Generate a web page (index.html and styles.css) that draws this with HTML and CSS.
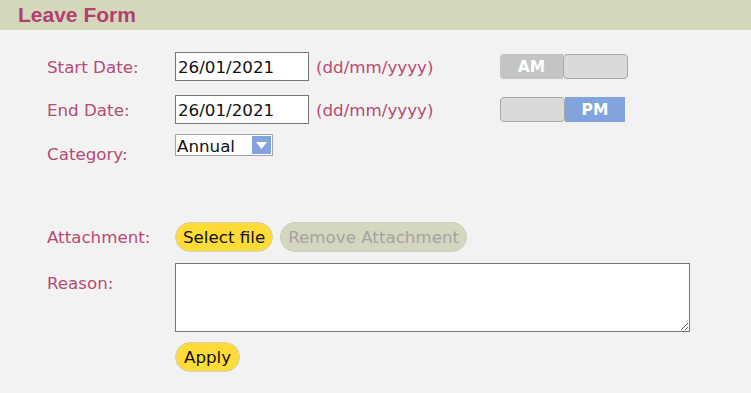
FILE: index.html
```html
<!DOCTYPE html>
<html>
<head>
    <title>Leave Form</title>
    <meta name="viewport" content="width=device-width, initial-scale=1">
    <link rel="stylesheet" href="styles.css">
</head>
<body>
    <div class="header">
        <h1>Leave Form</h1>
    </div>
    <form class="form">
        <div class="row">
            <label class="label">Start Date:</label>
            <input class="date" type="text" value="26/01/2021">
            <span class="hint">(dd/mm/yyyy)</span>
            <div class="toggle">
                <span class="toggle-on toggle-am">AM</span>
                <span class="toggle-knob"></span>
            </div>
        </div>
        <div class="row row-end">
            <label class="label">End Date:</label>
            <input class="date" type="text" value="26/01/2021">
            <span class="hint">(dd/mm/yyyy)</span>
            <div class="toggle">
                <span class="toggle-knob"></span>
                <span class="toggle-on toggle-pm">PM</span>
            </div>
        </div>
        <div class="row row-top row-category">
            <label class="label">Category:</label>
            <div class="select">
                <span class="select-value">Annual</span>
                <span class="select-arrow">
                    <svg width="11" height="7" viewBox="0 0 11 7"><polygon points="0,0 11,0 5.5,7" fill="#fff"/></svg>
                </span>
            </div>
        </div>
        <div class="row row-attach">
            <label class="label">Attachment:</label>
            <button type="button" class="btn btn-yellow">Select file</button>
            <button type="button" class="btn btn-disabled">Remove Attachment</button>
        </div>
        <div class="row row-top row-reason">
            <label class="label">Reason:</label>
            <textarea class="reason"></textarea>
        </div>
        <div class="actions">
            <button type="button" class="btn btn-yellow">Apply</button>
        </div>
    </form>
</body>
</html>
```

FILE: styles.css
```css
body {
    margin: 0;
    background-color: #f2f2f2;
    font-family: "DejaVu Sans", Verdana, sans-serif;
    font-size: 16.7px;
    color: #111;
}
.header {
    background-color: #d5d7bb;
    padding: 3px 18px;
    height: 24px;
}
.header h1 {
    margin: 0;
    font-family: "Liberation Sans", Arial, sans-serif;
    font-size: 21px;
    font-weight: bold;
    line-height: 24px;
    color: #b13f70;
}
.form {
    padding: 22px 0 0 47px;
}
.row {
    display: flex;
    align-items: baseline;
}
.row-top {
    align-items: flex-start;
}
.label {
    width: 128px;
    flex-shrink: 0;
    color: #b84a76;
}
.row-end {
    margin-top: 14px;
}
.row-category {
    margin-top: 10px;
}
.row-category .label {
    margin-top: 10px;
}
.row-reason .label {
    margin-top: 10px;
}
.row-attach {
    margin-top: 58px;
}
.row-reason {
    margin-top: 11px;
}
.date {
    box-sizing: border-box;
    width: 134px;
    height: 29px;
    margin: 0;
    padding: 0 2px;
    border: 1px solid #767676;
    background: #fff;
    font: inherit;
    color: #111;
}
.hint {
    width: 184px;
    margin-left: 7px;
    color: #b84a76;
}
.toggle {
    display: flex;
    height: 25px;
    align-self: center;
}
.toggle-on {
    display: flex;
    align-items: center;
    justify-content: center;
    color: #fff;
    font-weight: bold;
    font-size: 15.5px;
}
.toggle-am {
    width: 63px;
    background-color: #c4c4c4;
    border-radius: 4px 0 0 4px;
}
.toggle-pm {
    width: 60px;
    background-color: #83a3dc;
}
.toggle-knob {
    box-sizing: border-box;
    width: 65px;
    background-color: #dadad8;
    border: 1px solid #a8a8a8;
    border-radius: 4px;
}
.select {
    box-sizing: border-box;
    display: flex;
    align-items: center;
    width: 98px;
    height: 22px;
    border: 1px solid #a6a6a6;
    background: #fff;
}
.select-value {
    padding: 1px 0 0 1px;
    line-height: 20px;
}
.select-arrow {
    display: flex;
    align-items: center;
    justify-content: center;
    width: 19px;
    height: 18px;
    margin-left: auto;
    margin-right: 1px;
    background-color: #84a3dc;
}
.btn {
    box-sizing: border-box;
    height: 30px;
    margin: 0;
    padding: 0 7px;
    border: 1px solid #cfcfc4;
    border-radius: 15px;
    font: inherit;
    color: #111;
}
.btn-yellow {
    background-color: #ffdb38;
}
.btn-disabled {
    margin-left: 7px;
    background-color: #d5d6bf;
    border-color: #cdcdb9;
    color: #a3a3a3;
}
.reason {
    display: block;
    box-sizing: border-box;
    width: 515px;
    height: 69px;
    margin: 0;
    border: 1px solid #767676;
    background: #fff;
    font: inherit;
}
.actions {
    margin-top: 10px;
    padding-left: 128px;
}
.actions .btn {
    padding: 0 8px;
}
```
